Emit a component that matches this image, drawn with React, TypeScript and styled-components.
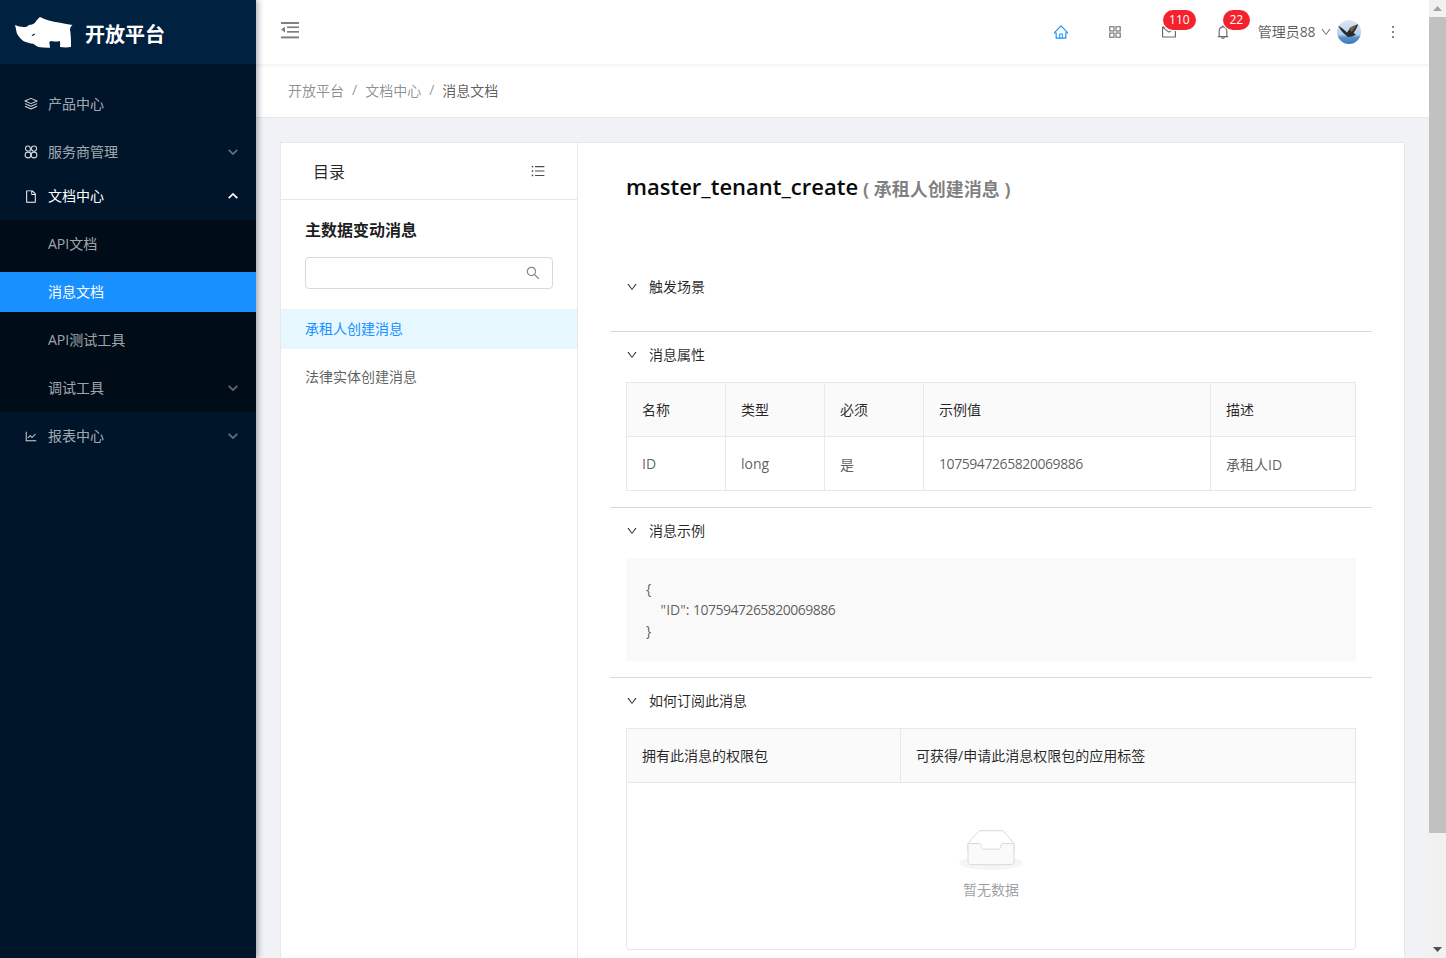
import React from "react";
import styled, { createGlobalStyle } from "styled-components";
import {
  AiOutlineHome,
  AiOutlineAppstore,
  AiOutlineMail,
  AiOutlineBell,
  AiOutlineMore,
  AiOutlineDown,
  AiOutlineSearch,
  AiOutlineFile,
  AiOutlineLineChart,
  AiOutlineUnorderedList,
} from "react-icons/ai";

const FONT = `"Open Sans", "Noto Sans CJK SC", sans-serif`;

const GlobalStyle = createGlobalStyle`
  html, body {
    margin: 0;
    padding: 0;
    height: 100%;
    overflow: hidden;
    background: #f0f2f5;
    font-family: ${FONT};
    font-size: 14px;
    color: rgba(0, 0, 0, 0.65);
  }
  * { box-sizing: border-box; }
`;

const Page = styled.div`
  display: flex;
  width: 1446px;
  height: 958px;
  overflow: hidden;
`;

/* ---------- sidebar ---------- */

const Sider = styled.aside`
  width: 256px;
  flex: none;
  background: #001529;
  box-shadow: 2px 0 6px rgba(0, 21, 41, 0.35);
  position: relative;
  z-index: 2;
`;

const Brand = styled.div`
  height: 64px;
  background: #002140;
  display: flex;
  align-items: center;
  padding: 2px 0 0 15px;
  gap: 12px;
`;

const BrandName = styled.span`
  font-size: 20px;
  font-weight: 700;
  color: #fff;
`;

const Menu = styled.nav`
  padding-top: 20px;
`;

const MenuItem = styled.div<{ $active?: boolean; $gap?: number; $sub?: boolean; $selected?: boolean }>`
  height: 40px;
  margin-bottom: ${(p) => p.$gap ?? 8}px;
  padding-left: ${(p) => (p.$sub ? 48 : 24)}px;
  padding-right: 18px;
  display: flex;
  align-items: center;
  line-height: 40px;
  color: ${(p) => (p.$active || p.$selected ? "#fff" : "rgba(255, 255, 255, 0.65)")};
  background: ${(p) => (p.$selected ? "#1890ff" : "transparent")};
`;

const MenuIcon = styled.span<{ $bright?: boolean }>`
  width: 14px;
  height: 14px;
  margin-right: 10px;
  display: inline-flex;
  align-items: center;
  justify-content: center;
  font-size: 17px;
  color: ${(p) => (p.$bright ? "#fff" : "rgba(255, 255, 255, 0.82)")};
`;

const MenuLabel = styled.span`
  flex: 1;
`;

const Caret = styled.svg<{ $open?: boolean }>`
  width: 10px;
  height: 6px;
  fill: none;
  stroke: ${(p) => (p.$open ? "#fff" : "rgba(255, 255, 255, 0.4)")};
  stroke-width: 1.7;
  transform: ${(p) => (p.$open ? "rotate(180deg)" : "none")};
`;

const SubMenu = styled.div`
  background: #000c17;
  padding: 4px 0;
  margin-bottom: 4px;
`;

/* ---------- main ---------- */

const Main = styled.div`
  flex: 1;
  min-width: 0;
  display: flex;
  flex-direction: column;
  overflow: hidden;
`;

const Header = styled.header`
  height: 64px;
  flex: none;
  background: #fff;
  box-shadow: 0 1px 4px rgba(0, 21, 41, 0.08);
  display: flex;
  align-items: center;
  justify-content: space-between;
  padding: 0 18px 0 25px;
  position: relative;
  z-index: 1;
`;

const FoldButton = styled.svg`
  width: 18px;
  height: 17px;
  fill: #808080;
  margin-top: -4px;
`;

const HeaderRight = styled.div`
  display: flex;
  align-items: center;
`;

const NavIcon = styled.span<{ $active?: boolean }>`
  width: 54px;
  height: 64px;
  display: flex;
  align-items: center;
  justify-content: center;
  font-size: 16px;
  position: relative;
  color: ${(p) => (p.$active ? "#1890ff" : "rgba(0, 0, 0, 0.6)")};
`;

const Badge = styled.span<{ $left: number; $width: number }>`
  position: absolute;
  top: 10px;
  left: ${(p) => p.$left}px;
  width: ${(p) => p.$width}px;
  height: 20px;
  border-radius: 10px;
  background: #f5222d;
  color: #fff;
  font-size: 12px;
  line-height: 20px;
  text-align: center;
  box-shadow: 0 0 0 1px #fff;
`;

const User = styled.div`
  display: flex;
  align-items: center;
  margin-left: 8px;
`;

const UserName = styled.span`
  color: rgba(0, 0, 0, 0.65);
  margin-top: -2px;
`;

const UserCaret = styled.span`
  display: inline-flex;
  font-size: 12px;
  margin: 0 5px;
  color: rgba(0, 0, 0, 0.55);
`;

const MoreButton = styled.span`
  width: 36px;
  margin-left: 14px;
  display: flex;
  justify-content: center;
  font-size: 18px;
  color: rgba(0, 0, 0, 0.65);
`;

const Digits = styled.span<{ $tight?: boolean }>`
  letter-spacing: ${(p) => (p.$tight ? "-0.53px" : "-0.43px")};
`;

const Breadcrumb = styled.div`
  height: 54px;
  flex: none;
  background: #fff;
  border-bottom: 1px solid #e8e8e8;
  padding: 0 32px 2px;
  display: flex;
  align-items: center;
  color: rgba(0, 0, 0, 0.45);
`;

const CrumbSep = styled.span`
  margin: 0 8px;
`;

const CrumbCurrent = styled.span`
  color: rgba(0, 0, 0, 0.65);
`;

const Content = styled.div`
  flex: 1;
  min-height: 0;
  padding: 24px 24px 0;
`;

const Card = styled.div`
  display: flex;
  height: 1000px;
  background: #fff;
  border: 1px solid #e8e8e8;
`;

/* ---------- catalogue ---------- */

const Catalog = styled.div`
  width: 297px;
  flex: none;
  border-right: 1px solid #e8e8e8;
`;

const CatalogHead = styled.div`
  height: 57px;
  border-bottom: 1px solid #e8e8e8;
  padding: 0 31px 1px 32px;
  display: flex;
  align-items: center;
  justify-content: space-between;
  font-size: 16px;
  color: rgba(0, 0, 0, 0.85);
`;

const CatalogIcon = styled.span`
  display: inline-flex;
  font-size: 16px;
  color: rgba(0, 0, 0, 0.7);
`;

const CatalogBody = styled.div`
  padding: 19px 24px 0;
`;

const CatalogTitle = styled.h3`
  margin: 0 0 16px;
  font-size: 16px;
  line-height: 22px;
  font-weight: 700;
  color: rgba(0, 0, 0, 0.9);
`;

const SearchBox = styled.div`
  height: 32px;
  border: 1px solid #d9d9d9;
  border-radius: 4px;
  display: flex;
  align-items: center;
  justify-content: flex-end;
  padding-right: 11px;
  font-size: 16px;
  color: rgba(0, 0, 0, 0.45);
`;

const DocList = styled.div`
  margin-top: 20px;
`;

const DocItem = styled.div<{ $active?: boolean }>`
  height: 40px;
  margin-bottom: 8px;
  padding-left: 24px;
  line-height: 40px;
  color: ${(p) => (p.$active ? "#1890ff" : "rgba(0, 0, 0, 0.65)")};
  background: ${(p) => (p.$active ? "#e6f7ff" : "transparent")};
`;

/* ---------- document ---------- */

const Doc = styled.div`
  flex: 1;
  min-width: 0;
  padding: 24px 32px 0;
`;

const DocTitle = styled.div`
  padding-left: 16px;
  height: 97px;
  display: flex;
  align-items: flex-start;
`;

const ApiName = styled.span`
  font-size: 22px;
  line-height: 40px;
  font-weight: 600;
  color: #0a0a0a;
  margin-top: -1px;
`;

const ApiCaption = styled.span`
  font-size: 18px;
  line-height: 44px;
  font-weight: 700;
  margin-left: 5px;
  color: rgba(0, 0, 0, 0.5);
`;

const Panel = styled.section<{ $last?: boolean }>`
  border-bottom: ${(p) => (p.$last ? "none" : "1px solid #d9d9d9")};
`;

const PanelHead = styled.div`
  height: 46px;
  padding: 0 0 2px 16px;
  display: flex;
  align-items: center;
  color: rgba(0, 0, 0, 0.85);
`;

const PanelArrow = styled.span`
  display: inline-flex;
  width: 12px;
  margin-right: 11px;
  margin-top: 2px;
  font-size: 12px;
`;

const PanelBody = styled.div`
  padding: 4px 16px 16px;
  min-height: 21px;
`;

const Table = styled.div<{ $columns: string }>`
  display: grid;
  grid-template-columns: ${(p) => p.$columns};
  border-top: 1px solid #e8e8e8;
  border-left: 1px solid #e8e8e8;
`;

const Cell = styled.div<{ $head?: boolean }>`
  height: 54px;
  padding: 0 15px ${(p) => (p.$head ? 2 : 0)}px;
  display: flex;
  align-items: center;
  border-right: 1px solid #e8e8e8;
  border-bottom: 1px solid #e8e8e8;
  background: ${(p) => (p.$head ? "#fafafa" : "#fff")};
  color: ${(p) => (p.$head ? "rgba(0, 0, 0, 0.85)" : "rgba(0, 0, 0, 0.65)")};
`;

const Code = styled.pre`
  margin: 0;
  padding: 20px;
  background: #f9f9f9;
  font-family: ${FONT};
  font-size: 14px;
  line-height: 21px;
  color: rgba(0, 0, 0, 0.65);
`;

const EmptyCell = styled.div`
  height: 167px;
  border: 1px solid #e8e8e8;
  border-top: none;
  border-radius: 0 0 4px 4px;
  display: flex;
  flex-direction: column;
  align-items: center;
  padding-top: 47px;
`;

const EmptyText = styled.span`
  margin-top: 8px;
  color: rgba(0, 0, 0, 0.4);
`;

/* ---------- scrollbar ---------- */

const ScrollTrack = styled.div`
  width: 17px;
  flex: none;
  height: 958px;
  background: #f1f1f1;
  display: flex;
  flex-direction: column;
  position: relative;
  z-index: 3;
`;

const ScrollArrow = styled.div`
  height: 17px;
  flex: none;
  display: flex;
  align-items: center;
  justify-content: center;
`;

const ScrollThumb = styled.div`
  height: 816px;
  flex: none;
  background: #c1c1c1;
`;

const ScrollRest = styled.div`
  flex: 1;
`;

/* ---------- drawings ---------- */

const RhinoLogo = () => (
  <svg width="58" height="32" viewBox="0 0 58 32">
    <path
      fill="#fff"
      d="M0 8 C3.5 9.5 7.5 10.5 11.7 9.7 L14 8 L17 7.6 C18 7 19 6.5 20 5.7 C21.5 3.5 23 1.5 25 0 C27.5 1 30 2.5 33 3.3 C37 4.6 41 5.3 45 5.7 C49 6.6 53.5 7.4 57.7 8 C56 9 55.3 10.5 55 12.3 C55.8 18 56.2 24 56 30 C52.5 30.6 48.5 30.6 45 30 C45.2 28 45.2 26 45 24 C42 24.8 39.5 24.8 36.7 24 C35 24.2 34.5 24.8 34.3 25.5 C34.6 27.2 35 29 35 30.7 C31 30.8 27 30.6 23.3 30 C21.5 29 19.8 27.8 18.3 26.7 C15 26.4 11.5 25.6 8.3 24 C5 21.5 2.5 18 1.7 15.7 C1.2 13 0.6 10.5 0 8 Z"
    />
    <path fill="#002140" d="M16.5 19 C17.3 17.6 18.7 16.8 20.2 16.5 C19.8 18 18.4 19.2 16.5 19 Z" />
  </svg>
);

const FoldGlyph = () => (
  <FoldButton viewBox="0 0 18 17">
    <rect x="0" y="0" width="18" height="2" />
    <rect x="6" y="4.4" width="12" height="1.7" />
    <rect x="6" y="9" width="12" height="1.7" />
    <rect x="0" y="14.4" width="18" height="2" />
    <path d="M4 4.8 V10.4 L0 7.6 Z" />
  </FoldButton>
);

const LayersIcon = () => (
  <svg width="16" height="14" viewBox="0 0 15 14" fill="none" stroke="currentColor" strokeWidth="1.1" strokeLinejoin="round">
    <path d="M7.5 1 L14 3.8 L7.5 6.6 L1 3.8 Z" />
    <path d="M1 6.6 L7.5 9.4 L14 6.6" />
    <path d="M1 9.4 L7.5 12.4 L14 9.4" />
  </svg>
);

const ServiceIcon = () => (
  <svg width="14" height="14" viewBox="0 0 14 14" fill="none" stroke="currentColor" strokeWidth="1.1">
    <path d="M4 1 C5.5 1 6.3 2.2 6.3 3.6 V6 H4 A2.5 2.5 0 0 1 4 1 Z" />
    <circle cx="10" cy="3.6" r="2.6" />
    <circle cx="4" cy="10" r="2.9" />
    <circle cx="10" cy="10" r="2.9" />
  </svg>
);

const ChevronPath = () => <path d="M0.7 0.8 L5 5 L9.3 0.8" />;

const Avatar = () => (
  <svg width="24" height="24" viewBox="0 0 24 24">
    <defs>
      <linearGradient id="sky" x1="0" y1="0" x2="0" y2="1">
        <stop offset="0" stopColor="#dfe6f6" />
        <stop offset="0.6" stopColor="#bccff0" />
        <stop offset="0.72" stopColor="#5b93cf" />
        <stop offset="1" stopColor="#3a78b8" />
      </linearGradient>
    </defs>
    <circle cx="12" cy="12" r="12" fill="url(#sky)" />
    <path d="M1.3 5.7 C4 7 7 9.5 10 12.5 C12 9 16 6 21.3 4 C20 8 18 11 16.5 13 L19 14.5 L15 16.5 L11 17 L8 14.5 C5 12 3 9 1.3 5.7 Z" fill="#2a2a26" />
    <path d="M12 8.5 C14 7 17 5.3 19.5 5 C18 8 16.5 10.5 14.5 12 Z" fill="#6d5f48" />
  </svg>
);

const EmptyInbox = () => (
  <svg width="64" height="41" viewBox="0 0 64 41">
    <ellipse cx="32" cy="33" rx="32" ry="7" fill="#f5f5f5" />
    <path d="M55 13.3 L44.9 1.8 C44.4 1.1 43.7 0.7 43 0.7 H21 C20.3 0.7 19.6 1.1 19.1 1.8 L9 13.3 V22 H55 Z" fill="#fff" stroke="#d9d9d9" />
    <path d="M41.6 16.4 C41.6 14.9 42.5 13.6 43.7 13.6 H55 V31 C55 33 53.8 34.7 52.2 34.7 H11.8 C10.2 34.7 9 33 9 31 V13.6 H20.3 C21.5 13.6 22.4 14.9 22.4 16.4 C22.4 17.9 23.3 19.1 24.5 19.1 H39.5 C40.7 19.1 41.6 17.9 41.6 16.4 Z" fill="#fafafa" stroke="#d9d9d9" />
  </svg>
);

const ArrowGlyph = ({ up }: { up?: boolean }) => (
  <svg width="9" height="5" viewBox="0 0 9 5">
    <path d={up ? "M4.5 0 L9 5 H0 Z" : "M0 0 H9 L4.5 5 Z"} fill={up ? "#a3a3a3" : "#505050"} />
  </svg>
);

function MenuCaret({ open }: { open?: boolean }) {
  return (
    <Caret $open={open} viewBox="0 0 10 6">
      <ChevronPath />
    </Caret>
  );
}

function CollapseHead({ title }: { title: string }) {
  return (
    <PanelHead>
      <PanelArrow>
        <AiOutlineDown />
      </PanelArrow>
      {title}
    </PanelHead>
  );
}

const messageAttrs = ["名称", "类型", "必须", "示例值", "描述"];

export default function App() {
  return (
    <>
      <GlobalStyle />
      <Page>
        <Sider>
          <Brand>
            <RhinoLogo />
            <BrandName>开放平台</BrandName>
          </Brand>
          <Menu>
            <MenuItem>
              <MenuIcon><LayersIcon /></MenuIcon>
              <MenuLabel>产品中心</MenuLabel>
            </MenuItem>
            <MenuItem $gap={4}>
              <MenuIcon><ServiceIcon /></MenuIcon>
              <MenuLabel>服务商管理</MenuLabel>
              <MenuCaret />
            </MenuItem>
            <MenuItem $active $gap={4}>
              <MenuIcon $bright><AiOutlineFile /></MenuIcon>
              <MenuLabel>文档中心</MenuLabel>
              <MenuCaret open />
            </MenuItem>
            <SubMenu>
              <MenuItem $sub>API文档</MenuItem>
              <MenuItem $sub $selected>消息文档</MenuItem>
              <MenuItem $sub>API测试工具</MenuItem>
              <MenuItem $sub $gap={0}>
                <MenuLabel>调试工具</MenuLabel>
                <MenuCaret />
              </MenuItem>
            </SubMenu>
            <MenuItem>
              <MenuIcon><AiOutlineLineChart /></MenuIcon>
              <MenuLabel>报表中心</MenuLabel>
              <MenuCaret />
            </MenuItem>
          </Menu>
        </Sider>

        <Main>
          <Header>
            <FoldGlyph />
            <HeaderRight>
              <NavIcon $active><AiOutlineHome /></NavIcon>
              <NavIcon><AiOutlineAppstore /></NavIcon>
              <NavIcon>
                <AiOutlineMail />
                <Badge $left={21} $width={33}>110</Badge>
              </NavIcon>
              <NavIcon>
                <AiOutlineBell />
                <Badge $left={27} $width={27}>22</Badge>
              </NavIcon>
              <User>
                <UserName>管理员<Digits>88</Digits></UserName>
                <UserCaret><AiOutlineDown /></UserCaret>
                <Avatar />
              </User>
              <MoreButton><AiOutlineMore /></MoreButton>
            </HeaderRight>
          </Header>

          <Breadcrumb>
            开放平台
            <CrumbSep>/</CrumbSep>
            文档中心
            <CrumbSep>/</CrumbSep>
            <CrumbCurrent>消息文档</CrumbCurrent>
          </Breadcrumb>

          <Content>
            <Card>
              <Catalog>
                <CatalogHead>
                  目录
                  <CatalogIcon><AiOutlineUnorderedList /></CatalogIcon>
                </CatalogHead>
                <CatalogBody>
                  <CatalogTitle>主数据变动消息</CatalogTitle>
                  <SearchBox><AiOutlineSearch /></SearchBox>
                </CatalogBody>
                <DocList>
                  <DocItem $active>承租人创建消息</DocItem>
                  <DocItem>法律实体创建消息</DocItem>
                </DocList>
              </Catalog>

              <Doc>
                <DocTitle>
                  <ApiName>master_tenant_create</ApiName>
                  <ApiCaption>( 承租人创建消息 )</ApiCaption>
                </DocTitle>

                <Panel>
                  <CollapseHead title="触发场景" />
                  <PanelBody />
                </Panel>

                <Panel>
                  <CollapseHead title="消息属性" />
                  <PanelBody>
                    <Table $columns="99px 99px 99px 287px 145px">
                      {messageAttrs.map((name) => (
                        <Cell $head key={name}>{name}</Cell>
                      ))}
                      <Cell>ID</Cell>
                      <Cell>long</Cell>
                      <Cell>是</Cell>
                      <Cell><Digits>1075947265820069886</Digits></Cell>
                      <Cell>承租人ID</Cell>
                    </Table>
                  </PanelBody>
                </Panel>

                <Panel>
                  <CollapseHead title="消息示例" />
                  <PanelBody>
                    <Code>
                      {`{
    "ID": `}
                      <Digits $tight>1075947265820069886</Digits>
                      {`
}`}
                    </Code>
                  </PanelBody>
                </Panel>

                <Panel $last>
                  <CollapseHead title="如何订阅此消息" />
                  <PanelBody>
                    <Table $columns="274px 455px">
                      <Cell $head>拥有此消息的权限包</Cell>
                      <Cell $head>可获得/申请此消息权限包的应用标签</Cell>
                    </Table>
                    <EmptyCell>
                      <EmptyInbox />
                      <EmptyText>暂无数据</EmptyText>
                    </EmptyCell>
                  </PanelBody>
                </Panel>
              </Doc>
            </Card>
          </Content>
        </Main>

        <ScrollTrack>
          <ScrollArrow><ArrowGlyph up /></ScrollArrow>
          <ScrollThumb />
          <ScrollRest />
          <ScrollArrow><ArrowGlyph /></ScrollArrow>
        </ScrollTrack>
      </Page>
    </>
  );
}
